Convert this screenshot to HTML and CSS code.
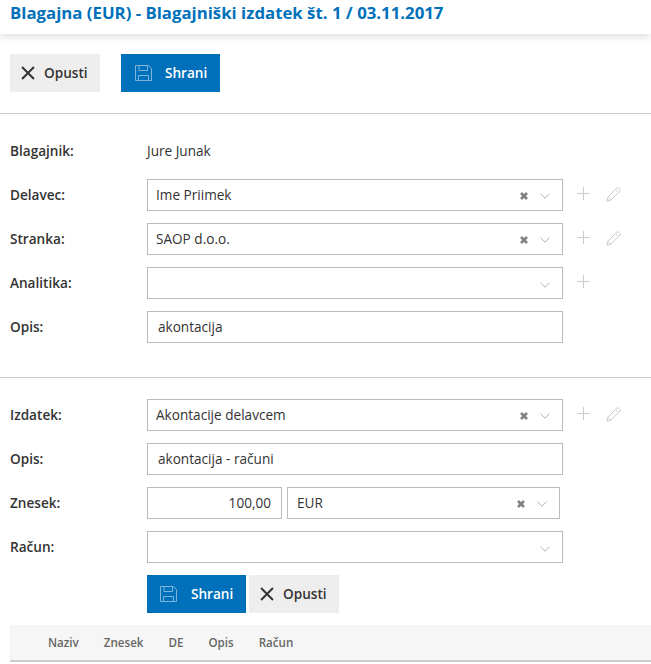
FILE: index.html
```html
<!DOCTYPE html>
<html lang="sl">
<head>
<meta charset="utf-8">
<title>Blagajniški izdatek</title>
<link rel="stylesheet" href="styles.css">
</head>
<body>
<svg class="defs" width="0" height="0" aria-hidden="true">
  <symbol id="i-x" viewBox="0 0 16 16"><path d="M1.2 1.200l13.600 13.600M14.800 1.200L1.200 14.800" fill="none" stroke="currentColor" stroke-width="2.300"/></symbol>
  <symbol id="i-save" viewBox="0 0 17 16"><path d="M.5.5h13l3 3v12H.5zM4 .5v5h8.500v-5M3.500 15.500v-5h10v5" fill="none" stroke="currentColor" stroke-width="1"/></symbol>
  <symbol id="i-clear" viewBox="0 0 8 8"><path d="M1 1l6 6M7 1L1 7" fill="none" stroke="currentColor" stroke-width="2.600"/></symbol>
  <symbol id="i-chev" viewBox="0 0 10 6"><path d="M.4.6L5 5.200 9.600.6" fill="none" stroke="currentColor" stroke-width="1"/></symbol>
  <symbol id="i-plus" viewBox="0 0 13 13"><path d="M6.500 0v13M0 6.500h13" fill="none" stroke="currentColor" stroke-width="1"/></symbol>
  <symbol id="i-pen" viewBox="0 0 15 15"><path d="M.8 14.200l1-4L10.800 1.200a1.400 1.400 0 0 1 2 0l1 1a1.400 1.400 0 0 1 0 2L4.800 13.200zM1.800 10.200l3 3M9.500 2.500l3 3" fill="none" stroke="currentColor" stroke-width="1"/></symbol>
</svg>

<header class="topbar"><h1 class="title">Blagajna (EUR) - Blagajniški izdatek št. 1 / 03.11.2017</h1></header>

<div class="toolbar">
  <button class="btn btn-grey btn-top-cancel"><svg class="ico-x"><use href="#i-x"/></svg><span class="btn-label">Opusti</span></button>
  <button class="btn btn-blue"><svg class="ico-save"><use href="#i-save"/></svg><span class="btn-label">Shrani</span></button>
</div>

<section class="section section-first">
  <div class="row"><span class="label">Blagajnik:</span><span class="value">Jure Junak</span></div>
  <div class="row"><span class="label">Delavec:</span>
    <div class="field select"><span class="text">Ime Priimek</span><svg class="clear"><use href="#i-clear"/></svg><svg class="chev"><use href="#i-chev"/></svg></div>
    <svg class="plus"><use href="#i-plus"/></svg><svg class="pen"><use href="#i-pen"/></svg>
  </div>
  <div class="row"><span class="label">Stranka:</span>
    <div class="field select"><span class="text">SAOP d.o.o.</span><svg class="clear"><use href="#i-clear"/></svg><svg class="chev"><use href="#i-chev"/></svg></div>
    <svg class="plus"><use href="#i-plus"/></svg><svg class="pen"><use href="#i-pen"/></svg>
  </div>
  <div class="row"><span class="label">Analitika:</span>
    <div class="field select empty"><span class="text"></span><svg class="chev"><use href="#i-chev"/></svg></div>
    <svg class="plus"><use href="#i-plus"/></svg>
  </div>
  <div class="row"><span class="label">Opis:</span>
    <div class="field input"><span class="text">akontacija</span></div>
  </div>
</section>

<section class="section section-second">
  <div class="row"><span class="label">Izdatek:</span>
    <div class="field select"><span class="text">Akontacije delavcem</span><svg class="clear"><use href="#i-clear"/></svg><svg class="chev"><use href="#i-chev"/></svg></div>
    <svg class="plus"><use href="#i-plus"/></svg><svg class="pen"><use href="#i-pen"/></svg>
  </div>
  <div class="row"><span class="label">Opis:</span>
    <div class="field input"><span class="text">akontacija - računi</span></div>
  </div>
  <div class="row"><span class="label">Znesek:</span>
    <div class="amount-group">
      <div class="field amount"><span class="text">100,00</span></div>
      <div class="field select currency"><span class="text">EUR</span><svg class="clear"><use href="#i-clear"/></svg><svg class="chev"><use href="#i-chev"/></svg></div>
    </div>
  </div>
  <div class="row"><span class="label">Račun:</span>
    <div class="field select empty"><span class="text"></span><svg class="chev"><use href="#i-chev"/></svg></div>
  </div>
  <div class="actions">
    <button class="btn btn-blue"><svg class="ico-save"><use href="#i-save"/></svg><span class="btn-label">Shrani</span></button>
    <button class="btn btn-grey btn-inline-cancel"><svg class="ico-x"><use href="#i-x"/></svg><span class="btn-label">Opusti</span></button>
  </div>
</section>

<div class="table-head">
  <span class="col col-naziv">Naziv</span>
  <span class="col col-znesek">Znesek</span>
  <span class="col col-de">DE</span>
  <span class="col col-opis">Opis</span>
  <span class="col col-racun">Račun</span>
</div>
</body>
</html>
```
FILE: styles.css
```css
* { box-sizing: border-box; }
html, body { margin: 0; padding: 0; }
body {
  width: 651px;
  height: 664px;
  overflow: hidden;
  background: #fff;
  color: #333;
  font-family: "Open Sans", sans-serif;
  font-size: 13.6px;
}
.defs { position: absolute; }
.topbar {
  height: 34px;
  padding: 3px 10px 0;
  background: #fff;
  box-shadow: 0 3px 8px rgba(0, 0, 0, .13);
}
.title {
  margin: 0;
  font-size: 16.8px;
  line-height: 20px;
  font-weight: 700;
  color: #0070ba;
  white-space: nowrap;
}
.toolbar {
  display: flex;
  gap: 21px;
  height: 80px;
  padding: 20px 10px 0;
  border-bottom: 1px solid #ccc;
}
.btn {
  display: flex;
  align-items: center;
  height: 38px;
  border: 0;
  padding: 0;
  font-family: inherit;
  font-size: 13.6px;
  font-weight: 600;
}
.btn-label { padding-bottom: 2px; }
.btn-grey { background: #eee; color: #333; }
.btn-blue { width: 99px; padding-left: 14px; background: #0070ba; color: #fff; }
.btn-top-cancel, .btn-inline-cancel { width: 90px; padding-left: 11px; }
.ico-x { width: 14px; height: 14px; margin-right: 9px; color: #333; }
.ico-save { width: 17px; height: 16px; margin-right: 13px; color: #7db5dc; }
.actions .btn-blue { padding-left: 13px; }
.actions .ico-save { margin-right: 14px; }
.section { padding-left: 10px; }
.section-first { height: 264px; padding-top: 21px; border-bottom: 1px solid #ccc; }
.section-second { padding-top: 21px; }
.row {
  display: flex;
  align-items: center;
  height: 32px;
  margin-bottom: 12px;
}
.label {
  width: 137px;
  flex: none;
  padding-bottom: 2px;
  font-weight: 600;
  color: #333;
}
.value { padding-bottom: 2px; color: #333; }
.field {
  display: flex;
  align-items: center;
  width: 416px;
  height: 32px;
  flex: none;
  border: 1px solid #bbb;
  background: #fff;
  padding: 0 9px 0 8px;
  color: #333;
}
.input { padding-left: 10px; }
.text { flex: 1; padding-bottom: 2px; white-space: nowrap; }
.clear { width: 8px; height: 8px; margin-top: 2px; margin-right: 12px; color: #808080; flex: none; }
.chev { width: 10px; height: 6px; margin-top: 1px; margin-right: 3px; color: #b0b0b0; flex: none; }
.empty .chev { margin-top: 3px; }
.plus { width: 13px; height: 13px; margin-left: 14px; margin-bottom: 3px; color: #ccc; flex: none; }
.pen { width: 15px; height: 15px; margin-left: 16px; margin-bottom: 2px; color: #ccc; flex: none; }
.amount-group { display: flex; gap: 5px; }
.amount { width: 135px; padding-right: 10px; }
.amount .text { text-align: right; }
.currency { width: 273px; padding-left: 9px; }
.actions { display: flex; gap: 3px; padding-left: 137px; margin-bottom: 12px; }
.table-head {
  display: flex;
  align-items: center;
  height: 37px;
  margin: 0 0 0 10px;
  padding-bottom: 1px;
  background: #f6f6f6;
  border-bottom: 2px solid #ccc;
  font-size: 11.6px;
  font-weight: 600;
  color: #666;
}
.col-naziv { margin-left: 38px; }
.col-znesek { margin-left: 25px; }
.col-de { margin-left: 25px; }
.col-opis { margin-left: 25px; }
.col-racun { margin-left: 25px; }
```
